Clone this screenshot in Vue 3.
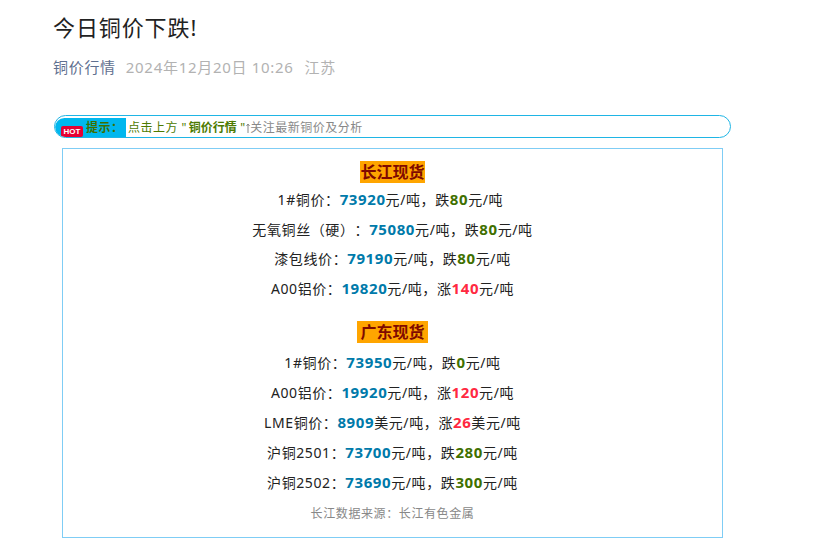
<script setup>
const groups = [
  { title: '长江现货', wide: false, rows: [
    { label: '1#铜价：', price: '73920', unit: '元/吨', dir: '跌', change: '80', tail: '\u00a0' },
    { label: '无氧铜丝（硬）：', price: '75080', unit: '元/吨', dir: '跌', change: '80', tail: '' },
    { label: '漆包线价：', price: '79190', unit: '元/吨', dir: '跌', change: '80', tail: '' },
    { label: 'A00铝价：', price: '19820', unit: '元/吨', dir: '涨', change: '140', tail: '' },
  ]},
  { title: '广东现货', wide: true, rows: [
    { label: '1#铜价：', price: '73950', unit: '元/吨', dir: '跌', change: '0', tail: '' },
    { label: 'A00铝价：', price: '19920', unit: '元/吨', dir: '涨', change: '120', tail: '' },
    { label: 'LME铜价：', price: '8909', unit: '美元/吨', dir: '涨', change: '26', tail: '' },
    { label: '沪铜2501：', price: '73700', unit: '元/吨', dir: '跌', change: '280', tail: '' },
    { label: '沪铜2502：', price: '73690', unit: '元/吨', dir: '跌', change: '300', tail: '' },
  ]},
]
</script>

<template>
  <div class="page">
    <h1 class="title">今日铜价下跌!</h1>
    <div class="meta">
      <span class="source">铜价行情</span>
      <span class="date">2024年12月20日 10:26</span>
      <span class="place">江苏</span>
    </div>
    <div class="tip">
      <div class="tip-head">
        <span class="hot">HOT</span>
        <span class="tip-label">提示：</span>
      </div>
      <div class="tip-text">
        <span class="green">点击上方 " <b>铜价行情</b> "</span><svg class="arrow" width="4" height="10" viewBox="0 0 4 10"><path d="M2 10V1M0.5 3L2 1l1.5 2" fill="none" stroke="#888" stroke-width="1" /></svg>关注最新铜价及分析
      </div>
    </div>
    <div class="box">
      <section v-for="g in groups" :key="g.title" class="group" :class="{ wide: g.wide }">
        <div class="head"><span class="head-text">{{ g.title }}</span></div>
        <p v-for="r in g.rows" :key="r.label" class="row">
          {{ r.label }}<b class="price">{{ r.price }}</b>{{ r.unit }}，{{ r.dir }}<b :class="r.dir === '涨' ? 'up' : 'down'">{{ r.change }}</b>{{ r.unit }}{{ r.tail }}
        </p>
      </section>
      <p class="note">长江数据来源：长江有色金属</p>
    </div>
  </div>
</template>

<style>
html, body { background: #fff; }
</style>

<style scoped>
.page {
  width: 678px;
  padding: 10px 0 0 53px;
  font-family: "Noto Sans", "Noto Sans CJK SC", sans-serif;
  color: #222;
  text-spacing-trim: space-all;
}
.title {
  margin: 0;
  font-size: 22px;
  font-weight: 400;
  line-height: 34px;
  letter-spacing: 0.9px;
  color: #222;
}
.meta {
  display: flex;
  margin-top: 11px;
  font-size: 15px;
  line-height: 24px;
  letter-spacing: 0.7px;
  color: #b2b2b2;
}
.source { color: #5f7090; margin-right: 10px; }
.date { margin-right: 11px; }
.tip {
  display: flex;
  height: 23px;
  margin: 36px 0 0 1px;
  box-sizing: border-box;
  border: 1px solid #1fb5e5;
  border-radius: 12px;
  overflow: hidden;
  font-size: 12px;
  line-height: 19px;
  letter-spacing: 0.5px;
}
.tip-head {
  display: flex;
  align-items: center;
  width: 71px;
  flex: none;
  margin-top: 2px;
  padding-left: 6px;
  box-sizing: border-box;
  background: #00b7ee;
  border-radius: 11px 0 0 11px;
}
.hot {
  flex: none;
  width: 22px;
  height: 11px;
  margin-top: 8px;
  border-radius: 2px;
  background: #e60033;
  color: #fff;
  font-family: "Liberation Sans", sans-serif;
  font-size: 8px;
  font-weight: 700;
  line-height: 11px;
  letter-spacing: 0;
  text-align: center;
}
.tip-label {
  margin-left: 3px;
  color: #3f6f00;
  font-weight: 700;
  white-space: nowrap;
}
.tip-text {
  margin-top: 2px;
  padding-left: 2px;
  color: #888;
  white-space: nowrap;
}
.green { color: #4d7a00; }
.green b { margin-left: -2px; letter-spacing: 0; }
.arrow { margin-right: 0.5px; vertical-align: -1px; }
.box {
  width: 661px;
  height: 390px;
  margin: 10px 0 0 9px;
  box-sizing: border-box;
  border: 1px solid #7fcdf5;
  padding-top: 11px;
  text-align: center;
  font-size: 14px;
  letter-spacing: 0.6px;
}
.group + .group { margin-top: 18px; }
.group { --row: 29.5px; }
.head {
  height: 24px;
  font-size: 16px;
  font-weight: 700;
  line-height: 25px;
  color: #7f0a00;
  letter-spacing: 0;
}
.wide { --row: 30px; }
.wide .head { height: 27px; }
.head-text { display: inline-block; background: #ffa500; height: 22px; line-height: 22px; }
.wide .head-text { padding: 0 3px; }
.row {
  margin: 0;
  height: var(--row);
  line-height: 30px;
  color: #222;
}
.price { color: #007aaa; font-size: 15px; }
.down { color: #3f7000; font-size: 15px; }
.up { color: #ff2941; font-size: 15px; }
.note {
  margin: 5px 0 0;
  font-size: 12px;
  line-height: 24px;
  color: #888;
}
</style>
